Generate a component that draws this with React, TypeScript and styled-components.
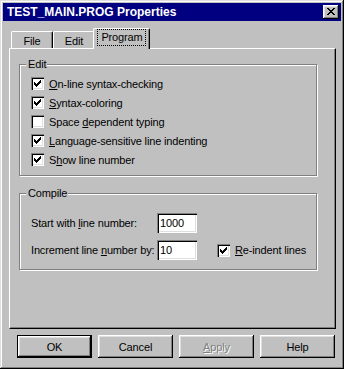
import React from "react";
import styled, { createGlobalStyle, css } from "styled-components";

const Global = createGlobalStyle`
  html, body { margin: 0; padding: 0; background: #c0c0c0; }
  body { font-family: "Liberation Sans", Arial, sans-serif; font-size: 11px; letter-spacing: -0.15px; color: #000; }
`;

const Window = styled.div`
  width: 344px;
  height: 369px;
  box-sizing: border-box;
  padding: 3px;
  background: #c0c0c0;
  display: flex;
  flex-direction: column;
  box-shadow: inset -1px -1px #000, inset 1px 1px #dfdfdf, inset -2px -2px #808080, inset 2px 2px #fff;
`;

const TitleBar = styled.div`
  height: 18px;
  background: #000080;
  display: flex;
  align-items: center;
  padding: 0 2px 0 4px;
  color: #fff;
  font-weight: bold;
  font-size: 12px;
  letter-spacing: 0;
`;

const Title = styled.span`
  flex: 1;
  white-space: nowrap;
`;

const CloseButton = styled.div`
  width: 16px;
  height: 14px;
  box-sizing: border-box;
  background: #c0c0c0;
  display: flex;
  align-items: center;
  justify-content: center;
  padding-bottom: 1px;
  box-shadow: inset -1px -1px #000, inset 1px 1px #fff, inset -2px -2px #808080, inset 2px 2px #dfdfdf;
`;

const Body = styled.div`
  padding: 7px 5px 0 6px;
  display: flex;
  flex-direction: column;
`;

const TabRow = styled.div`
  display: flex;
  align-items: flex-end;
  height: 20px;
  padding-left: 2px;
  position: relative;
  z-index: 1;
`;

const Tab = styled.div<{ $active?: boolean; $w: number }>`
  width: ${(p) => p.$w}px;
  box-sizing: border-box;
  background: #c0c0c0;
  display: flex;
  align-items: center;
  justify-content: center;
  border-top: 1px solid #fff;
  border-left: 1px solid #fff;
  border-right: 1px solid #000;
  border-radius: 2px 2px 0 0;
  box-shadow: inset -1px 0 #808080;
  ${(p) =>
    p.$active
      ? css`
          height: 21px;
          margin: 0 -2px -1px -2px;
          padding-bottom: 3px;
          position: relative;
          z-index: 2;
        `
      : css`
          height: 17px;
          padding-top: 1px;
        `}
`;

const FocusText = styled.span`
  outline: 1px dotted #000;
  padding: 1px 2px 1px 3px;
  line-height: 13px;
`;

const Panel = styled.div`
  height: 281px;
  box-sizing: border-box;
  border-top: 1px solid #fff;
  border-left: 1px solid #fff;
  border-right: 1px solid #000;
  border-bottom: 1px solid #000;
  box-shadow: inset -1px -1px #808080;
  padding: 15px 0 0 9px;
  display: flex;
  flex-direction: column;
`;

const Group = styled.div<{ $pt: number; $pb: number; $mt?: number }>`
  position: relative;
  width: 298px;
  box-sizing: border-box;
  border: 1px solid #808080;
  box-shadow: inset 1px 1px #fff, 1px 1px #fff;
  padding: ${(p) => p.$pt}px 0 ${(p) => p.$pb}px 11px;
  margin-top: ${(p) => p.$mt ?? 0}px;
  display: flex;
  flex-direction: column;
`;

const GroupLabel = styled.span`
  position: absolute;
  top: -8px;
  left: 6px;
  background: #c0c0c0;
  padding: 0 1px 0 2px;
  line-height: 14px;
`;

const CheckList = styled.div`
  display: flex;
  flex-direction: column;
  gap: 6px;
`;

const CheckRow = styled.label`
  display: flex;
  align-items: center;
  height: 13px;
  gap: 5px;
  white-space: nowrap;
`;

const Box = styled.span`
  width: 13px;
  height: 13px;
  flex: none;
  box-sizing: border-box;
  background: #fff;
  display: flex;
  padding: 3px;
  box-shadow: inset 1px 1px #808080, inset 2px 2px #000, inset -1px -1px #fff, inset -2px -2px #dfdfdf;
`;

const FieldGrid = styled.div`
  display: grid;
  grid-template-columns: 126px 40px auto;
  grid-auto-rows: 20px;
  row-gap: 7px;
  align-items: center;
`;

const FieldLabel = styled.span`
  white-space: nowrap;
`;

const TextInput = styled.div`
  width: 40px;
  height: 20px;
  box-sizing: border-box;
  background: #fff;
  padding: 0 3px;
  display: flex;
  align-items: center;
  box-shadow: inset 1px 1px #808080, inset 2px 2px #000, inset -1px -1px #fff, inset -2px -2px #dfdfdf;
`;

const SideCheck = styled(CheckRow)`
  margin-left: 20px;
`;

const ButtonRow = styled.div`
  display: flex;
  gap: 6px;
  margin-top: 6px;
  padding-left: 8px;
`;

const Button = styled.div<{ $default?: boolean; $disabled?: boolean }>`
  width: 75px;
  height: 23px;
  box-sizing: border-box;
  display: flex;
  align-items: center;
  justify-content: center;
  background: #c0c0c0;
  color: ${(p) => (p.$disabled ? "#808080" : "#000")};
  text-shadow: ${(p) => (p.$disabled ? "1px 1px #fff" : "none")};
  box-shadow: inset -1px -1px #000, inset 1px 1px #fff, inset -2px -2px #808080, inset 2px 2px #dfdfdf;
  ${(p) =>
    p.$default &&
    css`
      border: 1px solid #000;
    `}
`;

const Check = () => (
  <svg width="7" height="7" viewBox="0 0 7 7" shapeRendering="crispEdges">
    <path
      d="M0 2h1v3h-1z M1 3h1v3h-1z M2 4h1v3h-1z M3 3h1v3h-1z M4 2h1v3h-1z M5 1h1v3h-1z M6 0h1v3h-1z"
      fill="#000"
    />
  </svg>
);

const CloseGlyph = () => (
  <svg width="8" height="7" viewBox="0 0 8 7" shapeRendering="crispEdges">
    <path
      d="M0 0h2v1h-2z M6 0h2v1h-2z M1 1h2v1h-2z M5 1h2v1h-2z M2 2h4v1h-4z M3 3h2v1h-2z M2 4h4v1h-4z M1 5h2v1h-2z M5 5h2v1h-2z M0 6h2v1h-2z M6 6h2v1h-2z"
      fill="#000"
    />
  </svg>
);

const CheckBox = ({ checked }: { checked: boolean }) => <Box>{checked && <Check />}</Box>;

const items: { pre: string; key: string; post: string; checked: boolean }[] = [
  { pre: "", key: "O", post: "n-line syntax-checking", checked: true },
  { pre: "", key: "S", post: "yntax-coloring", checked: true },
  { pre: "Space ", key: "d", post: "ependent typing", checked: false },
  { pre: "", key: "L", post: "anguage-sensitive line indenting", checked: true },
  { pre: "S", key: "h", post: "ow line number", checked: true },
];

export default function App() {
  return (
    <>
      <Global />
      <Window>
        <TitleBar>
          <Title>TEST_MAIN.PROG Properties</Title>
          <CloseButton>
            <CloseGlyph />
          </CloseButton>
        </TitleBar>
        <Body>
          <TabRow>
            <Tab $w={42}>File</Tab>
            <Tab $w={42}>Edit</Tab>
            <Tab $w={57} $active>
              <FocusText>Program</FocusText>
            </Tab>
          </TabRow>
          <Panel>
            <Group $pt={12} $pb={9}>
              <GroupLabel>Edit</GroupLabel>
              <CheckList>
                {items.map((it) => (
                  <CheckRow key={it.post}>
                    <CheckBox checked={it.checked} />
                    <span>
                      {it.pre}
                      <u>{it.key}</u>
                      {it.post}
                    </span>
                  </CheckRow>
                ))}
              </CheckList>
            </Group>
            <Group $pt={19} $pb={9} $mt={17}>
              <GroupLabel>Compile</GroupLabel>
              <FieldGrid>
                <FieldLabel>
                  Start with <u>l</u>ine number:
                </FieldLabel>
                <TextInput>1000</TextInput>
                <span />
                <FieldLabel>
                  Increment line <u>n</u>umber by:
                </FieldLabel>
                <TextInput>10</TextInput>
                <SideCheck>
                  <CheckBox checked />
                  <span>
                    <u>R</u>e-indent lines
                  </span>
                </SideCheck>
              </FieldGrid>
            </Group>
          </Panel>
          <ButtonRow>
            <Button $default>OK</Button>
            <Button>Cancel</Button>
            <Button $disabled>
              <span>
                <u>A</u>pply
              </span>
            </Button>
            <Button>Help</Button>
          </ButtonRow>
        </Body>
      </Window>
    </>
  );
}
